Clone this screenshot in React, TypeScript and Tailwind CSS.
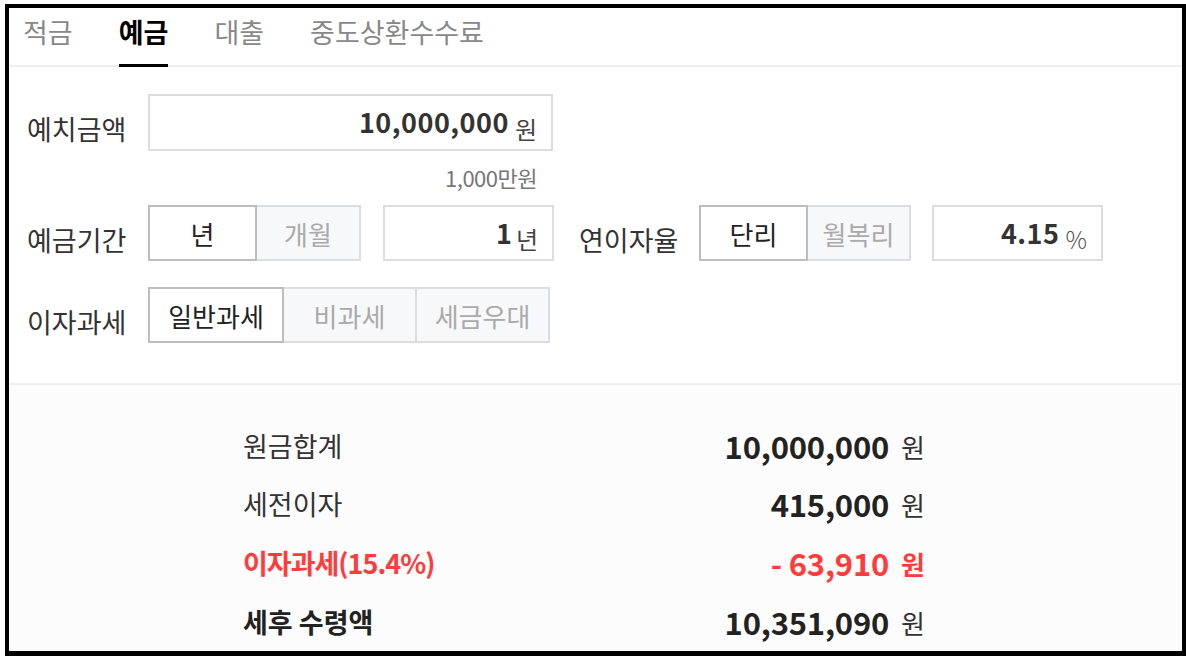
import React, { useState } from 'react';

const font = { fontFamily: '"Noto Sans CJK KR", "Noto Sans", sans-serif' };

const tabs = ['적금', '예금', '대출', '중도상환수수료'];

interface ToggleProps {
  options: { label: string; width: string }[];
  selected: number;
  onSelect: (i: number) => void;
}

const ToggleGroup: React.FC<ToggleProps> = ({ options, selected, onSelect }) => {
  return (
    <div className="flex h-[56px]">
      {options.map((o, i) => (
        <button
          key={o.label}
          onClick={() => onSelect(i)}
          className={`${o.width} h-full flex items-center justify-center text-[26px] border-2 ${
            i === selected
              ? 'bg-white border-[#bdbdbd] text-[#222] z-10'
              : 'bg-[#f7f8fa] border-[#dcdde0] text-[#aaa]'
          } ${i > 0 ? '-ml-[2px]' : ''}`}
        >
          {o.label}
        </button>
      ))}
    </div>
  );
};

const App: React.FC = () => {
  const [tab, setTab] = useState<number>(1);
  const [period, setPeriod] = useState<number>(0);
  const [rateType, setRateType] = useState<number>(0);
  const [tax, setTax] = useState<number>(0);

  return (
    <div className="w-[1186px] h-[656px] bg-white overflow-hidden" style={font}>
      <div className="ml-[5px] mt-[4px] w-[1181px] h-[652px] border-4 border-b-[7px] border-black flex flex-col">
        {/* tabs */}
        <div className="h-[59px] shrink-0 border-b-2 border-[#efefef] flex gap-[46px] pl-[14px]">
          {tabs.map((t, i) => (
            <button
              key={t}
              onClick={() => setTab(i)}
              className={`h-[59px] -mb-[2px] flex items-center pb-[8px] text-[27px] border-b-[3px] ${
                i === tab ? 'border-black text-black font-bold' : 'border-transparent text-[#888]'
              }`}
            >
              {t}
            </button>
          ))}
        </div>

        {/* form */}
        <div className="pl-[18px] pt-[27px] pb-[40px] border-b-2 border-[#efefef] shrink-0">
          <div className="flex items-center">
            <span className="w-[121px] pt-[14px] text-[27px] text-[#333]">예치금액</span>
            <div className="w-[405px] h-[57px] border-2 border-[#dcdde0] flex items-center justify-end pr-[14px]">
              <span className="text-[27px] font-bold text-[#333] tracking-[0.5px]">10,000,000</span>
              <span className="ml-[6px] mt-[12px] text-[24px] text-[#444]">원</span>
            </div>
          </div>
          <div className="w-[526px] flex justify-end pr-[16px] pt-[10px] pb-[12px] text-[22px] text-[#777] tracking-[-0.5px] leading-[32px]">
            1,000만원
          </div>
          <div className="flex items-center">
            <span className="w-[121px] pt-[14px] text-[27px] text-[#333]">예금기간</span>
            <ToggleGroup
              options={[
                { label: '년', width: 'w-[109px]' },
                { label: '개월', width: 'w-[106px]' },
              ]}
              selected={period}
              onSelect={setPeriod}
            />
            <div className="ml-[22px] w-[171px] h-[56px] border-2 border-[#dcdde0] flex items-center justify-end pr-[14px]">
              <span className="text-[27px] font-bold text-[#333]">1</span>
              <span className="ml-[4px] mt-[12px] text-[24px] text-[#444]">년</span>
            </div>
            <span className="ml-[25px] w-[120px] pt-[14px] text-[27px] text-[#333]">연이자율</span>
            <ToggleGroup
              options={[
                { label: '단리', width: 'w-[109px]' },
                { label: '월복리', width: 'w-[105px]' },
              ]}
              selected={rateType}
              onSelect={setRateType}
            />
            <div className="ml-[21px] w-[171px] h-[56px] border-2 border-[#dcdde0] flex items-center justify-end pr-[14px]">
              <span className="text-[27px] font-bold text-[#333] tracking-[0.5px]">4.15</span>
              <span className="ml-[6px] mt-[12px] text-[24px] font-light text-[#555]">%</span>
            </div>
          </div>
          <div className="flex items-center mt-[26px]">
            <span className="w-[121px] pt-[14px] text-[27px] text-[#333]">이자과세</span>
            <ToggleGroup
              options={[
                { label: '일반과세', width: 'w-[136px]' },
                { label: '비과세', width: 'w-[135px]' },
                { label: '세금우대', width: 'w-[135px]' },
              ]}
              selected={tax}
              onSelect={setTax}
            />
          </div>
        </div>

        {/* results */}
        <div className="flex-1 bg-[#fcfcfc] pt-[32px] pl-[234px]">
          <div className="w-[682px] flex flex-col">
            <div className="h-[58px] flex items-center justify-between">
              <span className="text-[27px] text-[#333]">원금합계</span>
              <span className="flex items-center">
                <span className="text-[31px] font-bold text-[#222] tracking-[-0.2px]">10,000,000</span>
                <span className="ml-[12px] text-[26px] text-[#333]">원</span>
              </span>
            </div>
            <div className="h-[59px] flex items-center justify-between">
              <span className="text-[27px] text-[#333]">세전이자</span>
              <span className="flex items-center">
                <span className="text-[31px] font-bold text-[#222] tracking-[-0.2px]">415,000</span>
                <span className="ml-[12px] text-[26px] text-[#333]">원</span>
              </span>
            </div>
            <div className="h-[59px] flex items-center justify-between text-[#ff3b3b]">
              <span className="text-[27px] font-bold tracking-[-1px]">이자과세(15.4%)</span>
              <span className="flex items-center font-bold">
                <span className="text-[31px] tracking-[-0.2px]">- 63,910</span>
                <span className="ml-[12px] text-[26px]">원</span>
              </span>
            </div>
            <div className="h-[58px] flex items-center justify-between">
              <span className="text-[27px] font-bold text-[#222]">세후 수령액</span>
              <span className="flex items-center">
                <span className="text-[31px] font-bold text-[#222] tracking-[-0.2px]">10,351,090</span>
                <span className="ml-[12px] text-[26px] text-[#333]">원</span>
              </span>
            </div>
          </div>
        </div>
      </div>
    </div>
  );
};

export default App;
